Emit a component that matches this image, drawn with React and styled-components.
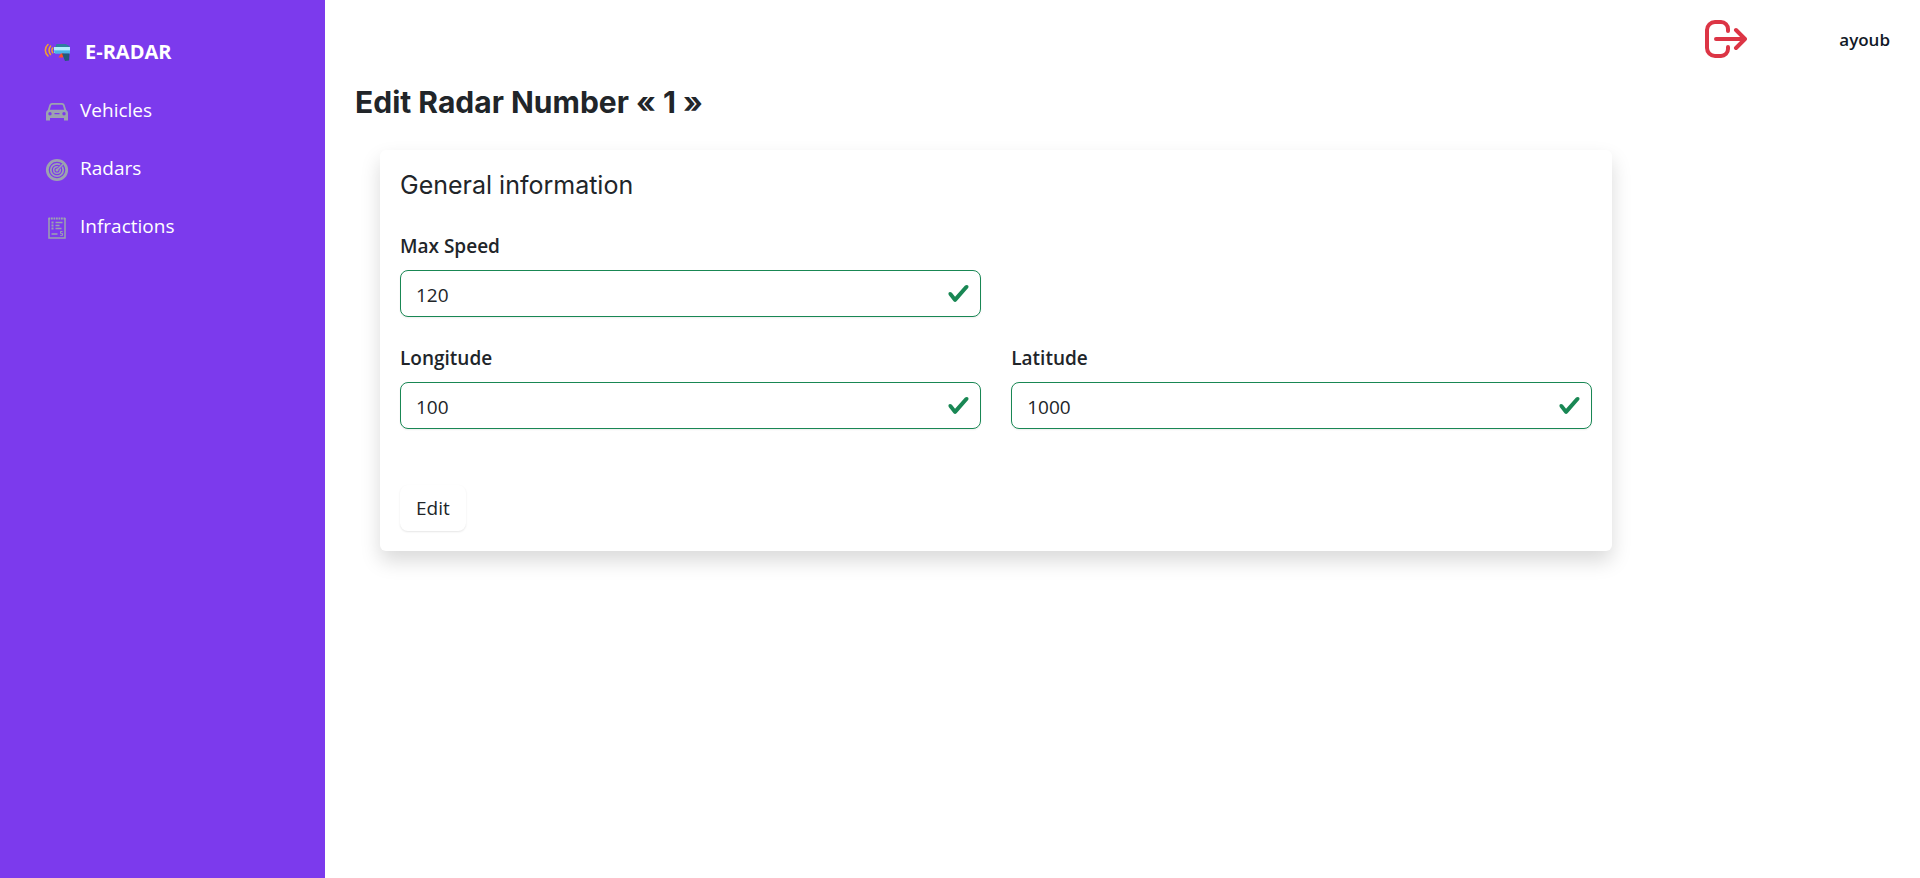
import React from "react";
import styled, { createGlobalStyle } from "styled-components";

const bodyFont = '"Segoe UI", "Open Sans", "Noto Sans", sans-serif';
const headingFont = '"Inter", "Segoe UI", sans-serif';

const GlobalStyle = createGlobalStyle`
  *, *::before, *::after { box-sizing: border-box; }
  body {
    margin: 0;
    background: #fff;
    color: #212529;
    font-family: ${bodyFont};
    font-size: 19px;
    line-height: 30px;
  }
  h1, h2 { margin: 0; }
`;

const Page = styled.div`
  display: flex;
  min-height: 100vh;
`;

const Sidebar = styled.nav`
  flex: 0 0 325px;
  padding: 37px 44px;
  background: #7c3aed;
`;

const Brand = styled.a`
  display: flex;
  align-items: center;
  gap: 14px;
  height: 30px;
  color: #fff;
  font-size: 20px;
  font-weight: 700;
  text-decoration: none;
`;

const NavList = styled.ul`
  display: flex;
  flex-direction: column;
  gap: 28px;
  margin: 28px 0 0;
  padding: 0;
  list-style: none;
`;

const NavLink = styled.a`
  display: flex;
  align-items: center;
  gap: 10px;
  height: 30px;
  color: #fff;
  text-decoration: none;

  svg {
    margin-top: 4px;
  }
`;

const Main = styled.main`
  flex: 1;
  min-width: 0;
  padding: 0 30px 30px;
`;

const TopBar = styled.header`
  display: flex;
  align-items: center;
  justify-content: flex-end;
  gap: 92px;
  height: 80px;
`;

const LogoutButton = styled.button`
  display: flex;
  padding: 0 0 2px;
  border: 0;
  background: none;
  cursor: pointer;
`;

const UserName = styled.span`
  color: #111827;
  font-size: 17px;
  font-weight: 600;
`;

const Title = styled.h1`
  font-family: ${headingFont};
  font-size: 30px;
  font-weight: 700;
  line-height: 44px;
`;

const CardColumn = styled.div`
  width: 83.333%;
  padding: 0 15px;
`;

const CardRow = styled.div`
  padding: 26px 10px 0;
`;

const Card = styled.section`
  padding: 20px;
  border-radius: 6px;
  background: #fff;
  box-shadow: 0 10px 20px rgba(0, 0, 0, 0.15);
`;

const CardTitle = styled.h2`
  font-family: ${headingFont};
  font-size: 25px;
  font-weight: 400;
  line-height: 30px;
`;

const FieldGrid = styled.div`
  display: grid;
  grid-template-columns: 1fr 1fr;
  gap: 24px 30px;
  margin-top: 29px;
`;

const FieldCell = styled.div`
  grid-column: ${(p) => p.$column};
`;

const Label = styled.label`
  display: block;
  margin-bottom: 9px;
  padding-top: 2px;
  font-weight: 600;
  line-height: 30px;
`;

const InputWrap = styled.div`
  position: relative;
`;

const Input = styled.input`
  display: block;
  width: 100%;
  height: 47px;
  padding: 2px 48px 0 15px;
  border: 1px solid #198754;
  border-radius: 8px;
  background: #fff;
  box-shadow: 0 1px 2px rgba(0, 0, 0, 0.07);
  color: #212529;
  font-family: inherit;
  font-size: 19px;
  outline: none;
`;

const CheckSvg = styled.svg`
  position: absolute;
  top: 12px;
  right: 11px;
  pointer-events: none;
`;

const EditButton = styled.button`
  display: block;
  height: 46px;
  margin-top: 56px;
  padding: 0 16px;
  border: 0;
  border-radius: 8px;
  background: #fff;
  box-shadow: 0 1px 2px rgba(0, 0, 0, 0.1);
  color: #212529;
  font-family: inherit;
  font-size: 19px;
  cursor: pointer;
`;

function RadarGunIcon() {
  return (
    <svg width="27" height="20" viewBox="0 0 27 20" aria-hidden="true">
      <g fill="none" stroke="#f0a030" strokeWidth="1.6" strokeLinecap="round">
        <path d="M4 2.500C.500 5.500.500 11 4 14" />
        <path d="M6.500 4.200c-1.900 2.200-1.900 6 0 8.200" />
        <path d="M8.700 6c-1 1.200-1 3.500 0 4.700" />
      </g>
      <path d="M12.500 2h9l4 2v2H11z" fill="#2f7f9f" />
      <path d="M10 5h16v6H10z" fill="#8fe0fb" />
      <path d="M10 5h16v3H10z" fill="#b5edff" />
      <path d="M10 8.500h16v3.200H11z" fill="#4cb4e6" />
      <path d="M17 11.500l-2.500 4h4.500l1-4z" fill="#ff5023" />
      <path d="M18 11.500h7.500l-.5 7-4 .5z" fill="#235b78" />
    </svg>
  );
}

function CarIcon() {
  return (
    <svg width="26" height="18" viewBox="0 0 26 18" aria-hidden="true">
      <path
        fill="#9ca3af"
        fillRule="evenodd"
        d="M8 0h10q2 0 2.600 1.800L22.200 7Q24 8 24 10v7.500h-4V15H6v2.500H2V10q0-2 1.800-3L5.400 1.800Q6 0 8 0zm.3 1.800q-1 0-1.200.8L5.800 6.800h14.400l-1.300-4.200q-.2-.8-1.200-.8zM6 9a1.700 1.700 0 1 0 0 3.400A1.700 1.700 0 0 0 6 9zm14 0a1.700 1.700 0 1 0 0 3.400A1.700 1.700 0 0 0 20 9zM10.500 10v1.200h5V10z"
      />
    </svg>
  );
}

function RadarIcon() {
  return (
    <svg width="26" height="24" viewBox="0 0 26 24" aria-hidden="true">
      <g fill="none" stroke="#9ca3af">
        <circle cx="13" cy="12" r="9.700" strokeWidth="2.800" />
        <circle cx="13" cy="12" r="6.200" strokeWidth="1.700" />
        <circle cx="13" cy="12" r="3.300" strokeWidth="1.500" />
        <path d="M14 11l4.800-5" stroke="#7c3aed" strokeWidth="3" />
        <path d="M13 12l7-7" strokeWidth="1.600" />
      </g>
      <circle cx="13" cy="12" r="1.500" fill="#9ca3af" />
    </svg>
  );
}

function InfractionIcon() {
  return (
    <svg width="26" height="22" viewBox="0 0 26 22" aria-hidden="true">
      <g fill="none" stroke="#9ca3af" strokeWidth="1.500">
        <path d="M5 1v20h16V1" />
        <path d="M4.500 1.500h17" strokeWidth="2" strokeDasharray="1.800 .7" />
        <path d="M7.500 5.500h2M7.500 8.500h2M7.500 11.500h2" strokeWidth="1.800" />
        <path d="M11.500 5.500h7M11.500 8.500h4M11.500 11.500h6" strokeWidth="1.500" />
        <path d="M7.500 17h6" strokeWidth="1.500" />
        <path d="M18.500 14.500h-2v1.900h2v2h-2.200" strokeWidth="1" />
      </g>
    </svg>
  );
}

function LogoutIcon() {
  return (
    <svg width="44" height="40" viewBox="0 0 44 40" aria-hidden="true">
      <g
        fill="none"
        stroke="#dc3545"
        strokeWidth="4"
        strokeLinecap="round"
        strokeLinejoin="round"
      >
        <path d="M25 12V10a7 7 0 0 0-7-7h-6a8 8 0 0 0-8 8v18a8 8 0 0 0 8 8h6a7 7 0 0 0 7-7v-2" />
        <path d="M13 20h29M33 11l9 9-9 9" />
      </g>
    </svg>
  );
}

function CheckIcon() {
  return (
    <CheckSvg width="23" height="23" viewBox="0 0 8 8" aria-hidden="true">
      <path
        fill="#198754"
        d="M2.3 6.73.6 4.53c-.4-1.04.46-1.4 1.1-.8l1.1 1.4 3.4-3.8c.6-.63 1.6-.27 1.2.7l-4 4.6c-.43.5-.8.4-1.1.1z"
      />
    </CheckSvg>
  );
}

const navItems = [
  { label: "Vehicles", Icon: CarIcon },
  { label: "Radars", Icon: RadarIcon },
  { label: "Infractions", Icon: InfractionIcon },
];

function Field({ id, label, value, column }) {
  return (
    <FieldCell $column={column}>
      <Label htmlFor={id}>{label}</Label>
      <InputWrap>
        <Input id={id} type="text" inputMode="numeric" defaultValue={value} />
        <CheckIcon />
      </InputWrap>
    </FieldCell>
  );
}

export default function App() {
  return (
    <>
      <GlobalStyle />
      <Page>
        <Sidebar aria-label="Main">
          <Brand href="#">
            <RadarGunIcon />
            E-RADAR
          </Brand>
          <NavList>
            {navItems.map(({ label, Icon }) => (
              <li key={label}>
                <NavLink href="#">
                  <Icon />
                  {label}
                </NavLink>
              </li>
            ))}
          </NavList>
        </Sidebar>
        <Main>
          <TopBar>
            <LogoutButton type="button" aria-label="Log out">
              <LogoutIcon />
            </LogoutButton>
            <UserName>ayoub</UserName>
          </TopBar>
          <Title>Edit Radar Number « 1 »</Title>
          <CardRow>
            <CardColumn>
              <Card>
                <CardTitle>General information</CardTitle>
                <form onSubmit={(e) => e.preventDefault()}>
                  <FieldGrid>
                    <Field id="max-speed" label="Max Speed" value="120" column={1} />
                    <Field id="longitude" label="Longitude" value="100" column={1} />
                    <Field id="latitude" label="Latitude" value="1000" column={2} />
                  </FieldGrid>
                  <EditButton type="submit">Edit</EditButton>
                </form>
              </Card>
            </CardColumn>
          </CardRow>
        </Main>
      </Page>
    </>
  );
}
